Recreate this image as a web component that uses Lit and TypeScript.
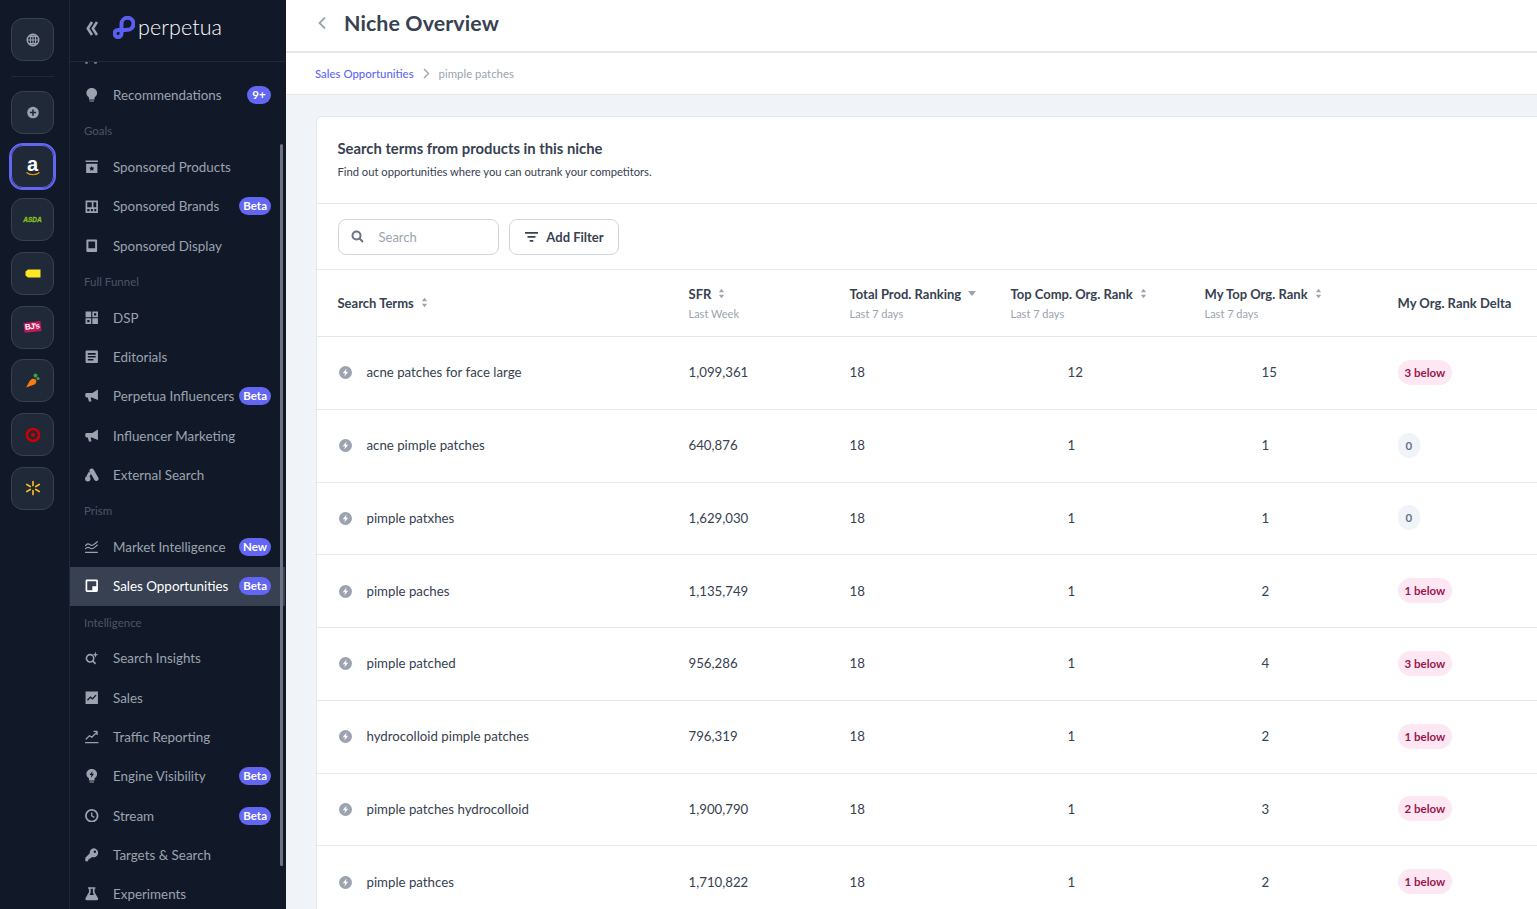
import { LitElement, html, css, svg } from "lit";
import { customElement } from "lit/decorators.js";

const ic = (body: unknown) => html`<svg class="nicon" viewBox="0 0 24 24" fill="currentColor" fill-rule="evenodd">${body}</svg>`;
const stroke = (body: unknown) => html`<svg class="nicon" viewBox="0 0 24 24" fill="none" stroke="currentColor" stroke-width="2.4" stroke-linecap="round" stroke-linejoin="round">${body}</svg>`;

const I: Record<string, unknown> = {
  bulb: ic(svg`<path d="M8 24h8v-2H8zM12 0C6.500 0 2.500 3.800 2.500 9c0 3.200 1.700 5.800 4.500 7.500V20.500h10V16.500c2.800-1.700 4.500-4.300 4.500-7.500C21.500 3.800 17.500 0 12 0z"/>`),
  products: ic(svg`<path d="M1 1h22v2.500H1zM2 6.500h20V23H2zM12 10.500l1.500 3 3.200.4-2.300 2.200.6 3.200-3-1.600-3 1.600.6-3.200-2.300-2.200 3.200-.4z"/>`),
  brands: ic(svg`<path d="M1 1h22v22H1zM4 4v9h8V4zM15 4v9h5V4zM4 16v4h4v-4zM10.500 16v4h3.500v-4zM16.500 16v4H20v-4z"/>`),
  display: ic(svg`<path d="M4 1h16a1.500 1.500 0 0 1 1.500 1.500v19A1.500 1.500 0 0 1 20 23H4a1.500 1.500 0 0 1-1.500-1.500v-19A1.500 1.500 0 0 1 4 1zM6 4.500v12h12v-12z"/>`),
  dsp: ic(svg`<path d="M1 1h10v10H1zM13 1h10v10H13zM16 4v4h4V4zM1 13h10v10H1zM4 16v4h4v-4zM13 13h10v10H13z"/>`),
  edit: ic(svg`<path d="M2.500 1h19A1.500 1.500 0 0 1 23 2.500v19a1.500 1.500 0 0 1-1.500 1.500h-19A1.500 1.500 0 0 1 1 21.500v-19A1.500 1.500 0 0 1 2.500 1zM5 5.500v2.800h14V5.500zM5 10.700v2.800h14v-2.800zM5 16v2.800h10V16z"/>`),
  mega: ic(svg`<path d="M23 1v18.500l-10-4v-.5H10l1.500 7H7l-2-7H3a2.500 2.500 0 0 1-2.500-2.500V9.500A2.500 2.500 0 0 1 3 7h10z"/>`),
  ads: html`<svg class="nicon" viewBox="0 0 24 24"><path d="M12 5 L20 19" fill="none" stroke="currentColor" stroke-width="8" stroke-linecap="round"/><path d="M9 8 L5 15" fill="none" stroke="currentColor" stroke-width="5"/><circle cx="5" cy="19" r="4.800" fill="currentColor"/></svg>`,
  market: stroke(svg`<path stroke-width="2" d="M1 10c3-4 5-4 8-1.500S14 10 17 7l5-4M1 15.500c3-3.500 5-3.500 8-1s5 1 8-1.500l5-4M1 22h21"/>`),
  opp: ic(svg`<path d="M3.500 1h17A2.500 2.500 0 0 1 23 3.500v17a2.500 2.500 0 0 1-2.500 2.500h-17A2.500 2.500 0 0 1 1 20.500v-17A2.500 2.500 0 0 1 3.500 1zM4 4v16h9v-7h7V4z"/>`),
  insights: html`<svg class="nicon" viewBox="0 0 24 24" fill="none" stroke="currentColor" stroke-width="2.800" stroke-linecap="round"><circle cx="9" cy="13" r="6.500"/><path d="M14 18l4 4"/><path fill="currentColor" stroke="none" d="M18.500 1l1.300 4.200L24 6.500l-4.200 1.300-1.300 4.200-1.300-4.200L13 6.500l4.200-1.300z"/></svg>`,
  sales: ic(svg`<path d="M1 1h22v22H1zM3.500 15.500l1.700 1.700 4.400-4.700 3.700 3.200 7.200-7.500-1.700-1.700-5.600 5.900-3.700-3.200z"/>`),
  traffic: stroke(svg`<path stroke-width="2.200" d="M1 22.500h22M2 16l6-6 4 3 9-9M16 2.500h5.500V8"/>`),
  engine: ic(svg`<path d="M8 24h8v-2H8zM12 0C6.500 0 2.500 3.800 2.500 9c0 3.200 1.700 5.800 4.500 7.500V20.500h10V16.500c2.800-1.700 4.500-4.300 4.500-7.500C21.500 3.800 17.500 0 12 0zM13.500 3.500l-5.500 7h3.500l-1 5.500 5.500-7.500h-3.500z"/>`),
  stream: ic(svg`<path d="M12 0a12 12 0 1 1 0 24 12 12 0 0 1 0-24zM12 3.200a8.800 8.800 0 1 0 0 17.600 8.800 8.800 0 0 0 0-17.600zM10.800 6h2.400v5.400l4 2.400-1.200 2-5.200-3.100z"/>`),
  key: ic(svg`<path d="M15.500 .5A8 8 0 1 1 12.500 16L10.500 18H8v2.500H5.500V23.500H.5v-6l8-8A8 8 0 0 1 15.500 .5zM17.500 4.500a2.200 2.200 0 1 0 0 4.400 2.200 2.200 0 0 0 0-4.400z"/>`),
  flask: ic(svg`<path d="M5.500 .5h13V3H17v6.500L23 19.500a3 3 0 0 1-2.500 4h-17a3 3 0 0 1-2.500-4L7 9.500V3H5.500zM10 3v7.300L8 14h8l-2-3.700V3z"/>`),
};

type Row = { l?: string; t?: string; i?: string; b?: string; active?: boolean };
const NAV: Row[] = [
  { t: "Recommendations", i: "bulb", b: "9+" },
  { l: "Goals" },
  { t: "Sponsored Products", i: "products" },
  { t: "Sponsored Brands", i: "brands", b: "Beta" },
  { t: "Sponsored Display", i: "display" },
  { l: "Full Funnel" },
  { t: "DSP", i: "dsp" },
  { t: "Editorials", i: "edit" },
  { t: "Perpetua Influencers", i: "mega", b: "Beta" },
  { t: "Influencer Marketing", i: "mega" },
  { t: "External Search", i: "ads" },
  { l: "Prism" },
  { t: "Market Intelligence", i: "market", b: "New" },
  { t: "Sales Opportunities", i: "opp", b: "Beta", active: true },
  { l: "Intelligence" },
  { t: "Search Insights", i: "insights" },
  { t: "Sales", i: "sales" },
  { t: "Traffic Reporting", i: "traffic" },
  { t: "Engine Visibility", i: "engine", b: "Beta" },
  { t: "Stream", i: "stream", b: "Beta" },
  { t: "Targets & Search", i: "key" },
  { t: "Experiments", i: "flask" },
];

const ROWS: [string, string, string, string, string][] = [
  ["acne patches for face large", "1,099,361", "12", "15", "3 below"],
  ["acne pimple patches", "640,876", "1", "1", "0"],
  ["pimple patxhes", "1,629,030", "1", "1", "0"],
  ["pimple paches", "1,135,749", "1", "2", "1 below"],
  ["pimple patched", "956,286", "1", "4", "3 below"],
  ["hydrocolloid pimple patches", "796,319", "1", "2", "1 below"],
  ["pimple patches hydrocolloid", "1,900,790", "1", "3", "2 below"],
  ["pimple pathces", "1,710,822", "1", "2", "1 below"],
];

const sort = html`<svg class="sort" viewBox="0 0 8 12" fill="#9ca3af"><path d="M4 .5 7 4.500H1zM4 11.500 1 7.500h6z"/></svg>`;
const caret = html`<svg class="caret" viewBox="0 0 8 5" fill="#9ca3af"><path d="M0 0h8L4 5z"/></svg>`;

const RETAIL = [
  html`<svg class="r" viewBox="0 0 18 18"><circle cx="9" cy="9" r="6.500" fill="none" stroke="#9ca3af" stroke-width="1.600"/><path d="M2.500 9h13M9 2.500v13M4 5h10M4 13h10" stroke="#9ca3af" stroke-width="1.200"/><ellipse cx="9" cy="9" rx="3" ry="6.500" fill="none" stroke="#9ca3af" stroke-width="1.200"/></svg>`,
  html`<svg class="r" viewBox="0 0 18 18"><circle cx="9" cy="8.500" r="6.500" fill="#9ca3af"/><path d="M5.500 8.500h7M9 5v7" stroke="#1f2937" stroke-width="1.800"/></svg>`,
];

@customElement("app-root")
export class AppRoot extends LitElement {
  static styles = css`
    :host { display: flex; width: 100%; height: 909px; overflow: hidden; font-family: "Lato", "Noto Sans", sans-serif; color: #374151; background: #f0f4f8; }
    * { box-sizing: border-box; }

    .rail { width: 70px; flex: none; background: #111928; border-right: 1px solid #1f2937; padding: 18px 0 0 11px; display: flex; flex-direction: column; }
    .btn { width: 43px; height: 43px; flex: none; background: #1f2937; border: 1px solid #374151; border-radius: 12px; display: flex; align-items: center; justify-content: center; }
    .divider { width: 43px; height: 1px; background: #1f2937; margin: 15px 0 14px; flex: none; }
    .stack { display: flex; flex-direction: column; gap: 10.7px; }
    .btn.on { outline: 2px solid #6366f1; outline-offset: 0; border-color: #6366f1; }
    .r { width: 16px; height: 16px; display: block; }
    .amz { display: flex; flex-direction: column; align-items: center; color: #fff; font: 700 20px/15px "Liberation Sans", sans-serif; }
    .amz svg { width: 14px; height: 4px; display: block; }
    .asda { color: #84c11f; font: italic 700 6.5px/1 "Liberation Sans", sans-serif; -webkit-text-stroke: 0.3px #84c11f; }
    .bjs { background: #c2185b; color: #fff; font: 700 8px/10px "Liberation Sans", sans-serif; padding: 0 1px; transform: rotate(-6deg); letter-spacing: -0.5px; }

    .side { width: 216px; flex: none; background: #111928; position: relative; display: flex; flex-direction: column; overflow: hidden; }
    .head { height: 62px; flex: none; border-bottom: 1px solid #1f2937; display: flex; align-items: center; padding: 0 0 6px 16px; }
    .chev { width: 12px; height: 15px; color: #9ca3af; margin: 2px 15px 0 0; flex: none; }
    .mark { width: 22px; height: 23px; flex: none; margin-right: 3px; }
    .word { color: #fff; font: 300 21.5px/1 "Lato", sans-serif; letter-spacing: 0.1px; }
    .dots { height: 13.300px; flex: none; display: flex; gap: 6px; padding-left: 15px; }
    .dots i { width: 3px; height: 2px; background: #6b7280; border-radius: 0 0 2px 2px; }
    .label { height: 32.670px; flex: none; display: flex; align-items: center; padding-left: 14px; color: #4b5563; font-size: 11.5px; }
    .item { height: 39.330px; flex: none; display: flex; align-items: center; padding: 0 14px 0 15px; color: #9ca3af; font-size: 13.4px; margin-right: 1px; }
    .item.on { background: #374151; color: #fff; }
    .nicon { width: 13.500px; height: 13.500px; flex: none; margin-right: 14.500px; display: block; }
    .item .txt { flex: 1; white-space: nowrap; }
    .bdg { background: #6366f1; color: #fff; font-size: 11.5px; font-weight: 700; height: 18px; line-height: 18px; border-radius: 9px; padding: 0 4px; min-width: 24px; text-align: center; flex: none; }
    .scroll { position: absolute; left: 210px; top: 144px; width: 3px; height: 722px; background: #6b7280; border-radius: 2px; }

    .main { flex: 1; min-width: 0; display: flex; flex-direction: column; overflow: hidden; }
    .top { height: 53px; flex: none; background: #fff; border-bottom: 2px solid #e5e7eb; display: flex; align-items: center; padding: 0 0 6px 31px; }
    .top svg { width: 10px; height: 14px; color: #9ca3af; margin-right: 17px; }
    .top h1 { margin: 0; font-size: 21.4px; font-weight: 700; color: #374151; letter-spacing: 0.1px; }
    .crumb { height: 42px; flex: none; background: #fff; border-bottom: 1px solid #e5e7eb; display: flex; align-items: center; padding: 0 0 1px 29px; font-size: 11.4px; color: #9ca3af; }
    .crumb a { color: #6366f1; font-weight: 500; }
    .crumb svg { width: 7px; height: 11px; margin: 0 9px; color: #9ca3af; }

    .card { margin: 21px 0 0 29.500px; width: 1300px; flex: none; background: #fff; border: 1px solid #e5e7eb; border-radius: 6px 0 0 0; }
    .ct { height: 87px; padding: 22px 21px 0; border-bottom: 1px solid #e5e7eb; }
    .ct h2 { margin: 0; font-size: 14.8px; line-height: 18px; font-weight: 700; color: #374151; }
    .ct p { margin: 8px 0 0; font-size: 11.2px; line-height: 14px; color: #374151; }
    .filters { height: 66px; padding: 15px 21px 0; border-bottom: 1px solid #e5e7eb; display: flex; gap: 10px; }
    .search { width: 161px; height: 36px; border: 1px solid #d1d5db; border-radius: 8px; display: flex; align-items: center; padding: 0 0 1px 12px; color: #9ca3af; font-size: 13px; }
    .search svg { width: 13px; height: 13px; margin-right: 15px; color: #6b7280; }
    .add { width: 110px; height: 36px; border: 1px solid #d1d5db; border-radius: 8px; display: flex; align-items: center; justify-content: center; padding: 0 0 1px 2px; font-size: 13px; font-weight: 700; color: #374151; }
    .add svg { width: 13px; height: 10px; margin-right: 8px; }

    .grid { display: grid; grid-template-columns: 372px 161px 161px 194px 193px 1fr; align-items: center; }
    .hd { height: 67px; border-bottom: 1px solid #e5e7eb; padding-bottom: 1px; }
    .hd > div:first-child, .row > div:first-child { padding-left: 21px; }
    .hname { display: flex; align-items: center; font-size: 13px; font-weight: 700; color: #374151; white-space: nowrap; }
    .hsub { font-size: 11px; color: #9ca3af; margin-top: 5px; line-height: 13px; }
    .sort { width: 7px; height: 11px; margin-left: 7px; flex: none; }
    .caret { width: 8px; height: 5px; margin-left: 7px; flex: none; }
    .row { height: 72.750px; border-bottom: 1px solid #e5e7eb; font-size: 13.25px; color: #374151; line-height: 16px; padding-bottom: 1px; }
    .term { display: flex; align-items: center; }
    .bolt { width: 13px; height: 13px; margin: 1px 15px 0 1px; flex: none; }
    .indent { padding-left: 57px; }
    .chip { display: inline-block; height: 25px; line-height: 25px; border-radius: 12.500px; padding: 0 7px; font-size: 11.5px; font-weight: 700; background: #fce7f3; color: #9d174d; }
    .chip.zero { background: #f0f4f8; color: #64748b; padding: 0 8px; }
  `;

  render() {
    return html`
      <div class="rail">
        <div class="btn">${RETAIL[0]}</div>
        <div class="divider"></div>
        <div class="stack">
          <div class="btn">${RETAIL[1]}</div>
          <div class="btn on"><div class="amz">a<svg viewBox="0 0 14 4"><path d="M.5 .5C4 3.500 10 3.500 13.500 .5" fill="none" stroke="#f59e0b" stroke-width="1.200"/></svg></div></div>
          <div class="btn"><span class="asda">ASDA</span></div>
          <div class="btn"><svg class="r" viewBox="0 0 16 16"><path d="M3 3.500h12.500v8H3L.5 9.500v-4z" fill="#fde725"/></svg></div>
          <div class="btn"><span class="bjs">BJ's</span></div>
          <div class="btn"><svg class="r" viewBox="0 0 16 16"><path d="M1 14.500 5 7.500c1.500-2 4-2.500 5.500-1s1 3.500-1 5z" fill="#f97d0b"/><circle cx="10.500" cy="2.500" r="2" fill="#43a047"/><circle cx="13" cy="5.500" r="1.600" fill="#43a047"/></svg></div>
          <div class="btn"><svg class="r" viewBox="0 0 16 16"><circle cx="8" cy="8" r="6" fill="none" stroke="#cc0000" stroke-width="2.600"/><circle cx="8" cy="8" r="2" fill="#cc0000"/></svg></div>
          <div class="btn"><svg class="r" viewBox="0 0 16 16" stroke="#fbb81f" stroke-width="1.700" stroke-linecap="round"><path d="M8 1.500v4M8 10.500v4M1.800 4.500l3.400 2M10.800 9.500l3.400 2M1.800 11.500l3.400-2M10.800 6.500l3.400-2"/></svg></div>
        </div>
      </div>

      <div class="side">
        <div class="head">
          <svg class="chev" viewBox="0 0 12 15" fill="none" stroke="currentColor" stroke-width="2.600"><path d="M6 1 1.800 7.500 6 14M11 1 6.800 7.500 11 14"/></svg>
          <svg class="mark" viewBox="0 0 22 23" fill="none" stroke="#5b5fef" stroke-width="4"><path d="M13 13.800h1.500a6 6 0 1 0-6-6v9.700a3.500 3.500 0 1 1-3.500-3.500H13"/></svg>
          <span class="word">perpetua</span>
        </div>
        <div class="dots"><i></i><i></i></div>
        ${NAV.map((n) =>
          n.l
            ? html`<div class="label">${n.l}</div>`
            : html`<div class="item ${n.active ? "on" : ""}">${I[n.i!]}<span class="txt">${n.t}</span>${n.b ? html`<span class="bdg">${n.b}</span>` : ""}</div>`
        )}
        <div class="scroll"></div>
      </div>

      <div class="main">
        <div class="top">
          <svg viewBox="0 0 10 14" fill="none" stroke="currentColor" stroke-width="1.800"><path d="M8 1.500 2.500 7 8 12.500"/></svg>
          <h1>Niche Overview</h1>
        </div>
        <div class="crumb">
          <a>Sales Opportunities</a>
          <svg viewBox="0 0 7 11" fill="none" stroke="currentColor" stroke-width="1.400"><path d="m1 1 4.500 4.500L1 10"/></svg>
          <span>pimple patches</span>
        </div>
        <div class="card">
          <div class="ct">
            <h2>Search terms from products in this niche</h2>
            <p>Find out opportunities where you can outrank your competitors.</p>
          </div>
          <div class="filters">
            <div class="search">
              <svg viewBox="0 0 13 13" fill="none" stroke="currentColor" stroke-width="2"><circle cx="5.500" cy="5.500" r="4"/><path d="m8.500 8.500 3.500 3.500"/></svg>
              Search
            </div>
            <div class="add">
              <svg viewBox="0 0 13 10" fill="#374151"><path d="M0 0h13v1.800H0zM2.500 4h8v1.800h-8zM4.700 8h3.600v1.800H4.700z"/></svg>
              Add Filter
            </div>
          </div>
          <div class="grid hd">
            <div><div class="hname">Search Terms ${sort}</div></div>
            <div><div class="hname">SFR ${sort}</div><div class="hsub">Last Week</div></div>
            <div><div class="hname">Total Prod. Ranking ${caret}</div><div class="hsub">Last 7 days</div></div>
            <div><div class="hname">Top Comp. Org. Rank ${sort}</div><div class="hsub">Last 7 days</div></div>
            <div><div class="hname">My Top Org. Rank ${sort}</div><div class="hsub">Last 7 days</div></div>
            <div><div class="hname">My Org. Rank Delta</div></div>
          </div>
          ${ROWS.map(
            (r) => html`<div class="grid row">
              <div class="term">
                <svg class="bolt" viewBox="0 0 13 13"><circle cx="6.500" cy="6.500" r="6.500" fill="#9ca3af"/><path d="M7.500 2.500 3.800 7.300h2.300l-.7 3.200 3.800-4.800H6.900z" fill="#fff"/></svg>
                ${r[0]}
              </div>
              <div>${r[1]}</div>
              <div>18</div>
              <div class="indent">${r[2]}</div>
              <div class="indent">${r[3]}</div>
              <div><span class="chip ${r[4] === "0" ? "zero" : ""}">${r[4]}</span></div>
            </div>`
          )}
        </div>
      </div>
    `;
  }
}
